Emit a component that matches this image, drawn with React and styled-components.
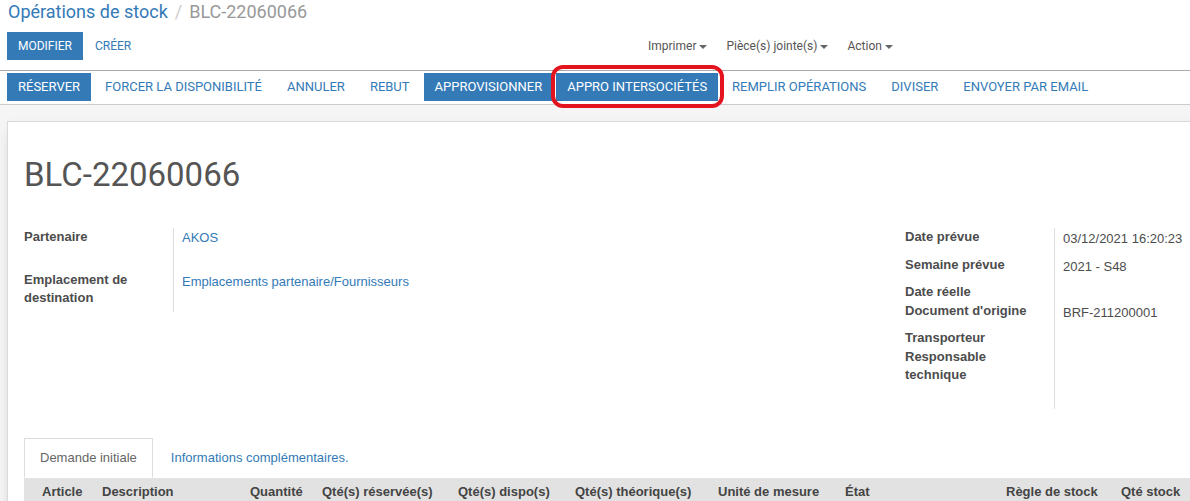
import React from "react";
import styled, { createGlobalStyle } from "styled-components";

const Global = createGlobalStyle`
  html, body { margin: 0; padding: 0; background: #fff; }
  body {
    font-family: "Liberation Sans", Arial, sans-serif;
    font-size: 13px;
    color: #4c4c4c;
    overflow: hidden;
  }
  * { box-sizing: border-box; }
`;

const BLUE = "#337ab7";

const Page = styled.div`
  width: 1190px;
  height: 501px;
  overflow: hidden;
  display: flex;
  flex-direction: column;
`;

const ControlPanel = styled.div`
  padding: 0 7px 10px 7px;
  background: #fff;
`;

const Breadcrumb = styled.div`
  font-family: Roboto, sans-serif;
  font-size: 18px;
  line-height: 24px;
  display: flex;
  gap: 7px;
  padding-left: 1px;
`;

const Crumb = styled.span`
  color: ${BLUE};
`;

const CrumbSep = styled.span`
  color: #ccc;
`;

const CrumbCurrent = styled.span`
  color: #999;
`;

const CpRow = styled.div`
  display: flex;
  align-items: center;
  margin-top: 8px;
`;

const CpButtons = styled.div`
  width: 641px;
  display: flex;
  gap: 1px;
`;

const Button = styled.button`
  font-family: Roboto, sans-serif;
  font-size: ${(p) => (p.$size === "sm" ? "12px" : "13px")};
  line-height: 18px;
  padding: 4px 10px;
  border: 1px solid ${(p) => (p.$primary ? BLUE : "transparent")};
  background: ${(p) => (p.$primary ? BLUE : "transparent")};
  color: ${(p) => (p.$primary ? "#fff" : BLUE)};
  text-transform: uppercase;
  border-radius: 0;
  white-space: nowrap;
  cursor: pointer;
  position: relative;
  ${(p) =>
    p.$flagged &&
    `
    &::after {
      content: "";
      position: absolute;
      inset: -9px -7px -8px -6px;
      border: 4px solid #e3141e;
      border-radius: 12px;
      pointer-events: none;
    }
  `}
`;

const Sidebar = styled.div`
  display: flex;
  gap: 19px;
  font-family: Roboto, sans-serif;
  font-size: 12px;
  line-height: 18px;
  color: #555;
`;

const Dropdown = styled.span`
  display: inline-flex;
  align-items: center;
`;

const Caret = styled.span`
  display: inline-block;
  width: 0;
  height: 0;
  margin-left: 3px;
  margin-top: 1px;
  border-top: 4px solid #666;
  border-left: 4px solid transparent;
  border-right: 4px solid transparent;
`;

const StatusBar = styled.div`
  border-top: 1px solid #aaa;
  border-bottom: 1px solid #ccc;
  padding: 2px 7px 3px;
  display: flex;
  gap: 3px;
  background: #fff;
`;

const FormBg = styled.div`
  flex: 1;
  background: #f5f5f5;
  padding: 16px 0 0 7px;
`;

const Sheet = styled.div`
  width: 1260px;
  height: 420px;
  background: #fff;
  border: 1px solid #dadada;
  box-shadow: 0 4px 14px -6px rgba(0, 0, 0, 0.25);
  padding: 34px 16px 0;
`;

const Title = styled.h1`
  margin: 0;
  font-family: Roboto, sans-serif;
  font-weight: 400;
  font-size: 33px;
  line-height: 38px;
  color: #555;
`;

const Groups = styled.div`
  display: flex;
  margin-top: 34px;
`;

const Group = styled.div`
  display: flex;
  flex-direction: column;
  width: ${(p) => p.$width || "auto"};
`;

const FieldRow = styled.div`
  display: grid;
  grid-template-columns: 150px 1fr;
  min-height: ${(p) => p.$h}px;
`;

const Label = styled.div`
  font-weight: bold;
  line-height: 18px;
  padding-right: 8px;
  border-right: 1px solid #ddd;
  color: #4c4c4c;
`;

const Value = styled.div`
  line-height: 18px;
  padding: ${(p) => p.$top || 0}px 0 0 8px;
  color: ${(p) => (p.$link ? BLUE : "#4c4c4c")};
  white-space: nowrap;
`;

const Tabs = styled.div`
  display: flex;
  gap: 2px;
  margin-top: 29px;
`;

const Tab = styled.div`
  padding: 10px 15px;
  line-height: 18px;
  border: 1px solid ${(p) => (p.$active ? "#ddd" : "transparent")};
  border-bottom-color: ${(p) => (p.$active ? "#fff" : "transparent")};
  background: ${(p) => (p.$active ? "#fff" : "transparent")};
  color: ${(p) => (p.$active ? "#666" : BLUE)};
`;

const TableHead = styled.div`
  display: grid;
  grid-template-columns: 60px 148px 72px 136px 117px 143px 127px 161px 115px 1fr;
  background: #e2e2e2;
  padding: 5px 0 6px 18px;
  font-weight: bold;
  line-height: 18px;
  color: #444;
`;

const HeadCell = styled.div`
  white-space: nowrap;
`;

const leftFields = [
  { label: "Partenaire", value: "AKOS", link: true, h: 43, top: 1 },
  {
    label: "Emplacement de destination",
    value: "Emplacements partenaire/Fournisseurs",
    link: true,
    h: 41,
    top: 2,
  },
];

const rightFields = [
  { label: "Date prévue", value: "03/12/2021 16:20:23", h: 28, top: 2 },
  { label: "Semaine prévue", value: "2021 - S48", h: 27, top: 2 },
  { label: "Date réelle", value: "", h: 19 },
  { label: "Document d'origine", value: "BRF-211200001", h: 27, top: 2 },
  { label: "Transporteur", value: "", h: 19 },
  { label: "Responsable technique", value: "", h: 61 },
];

const statusButtons = [
  { text: "Réserver", primary: true },
  { text: "Forcer la disponibilité" },
  { text: "Annuler" },
  { text: "Rebut" },
  { text: "Approvisionner", primary: true },
  { text: "Appro intersociétés", primary: true, flagged: true },
  { text: "Remplir opérations" },
  { text: "Diviser" },
  { text: "Envoyer par email" },
];

const columns = [
  "Article",
  "Description",
  "Quantité",
  "Qté(s) réservée(s)",
  "Qté(s) dispo(s)",
  "Qté(s) théorique(s)",
  "Unité de mesure",
  "État",
  "Règle de stock",
  "Qté stock",
];

function Fields({ items }) {
  return items.map((f) => (
    <FieldRow key={f.label} $h={f.h}>
      <Label>{f.label}</Label>
      <Value $link={f.link} $top={f.top}>
        {f.value}
      </Value>
    </FieldRow>
  ));
}

export default function App() {
  return (
    <Page>
      <Global />
      <ControlPanel>
        <Breadcrumb>
          <Crumb>Opérations de stock</Crumb>
          <CrumbSep>/</CrumbSep>
          <CrumbCurrent>BLC-22060066</CrumbCurrent>
        </Breadcrumb>
        <CpRow>
          <CpButtons>
            <Button $primary $size="sm">Modifier</Button>
            <Button $size="sm">Créer</Button>
          </CpButtons>
          <Sidebar>
            <Dropdown>
              Imprimer <Caret />
            </Dropdown>
            <Dropdown>
              Pièce(s) jointe(s) <Caret />
            </Dropdown>
            <Dropdown>
              Action <Caret />
            </Dropdown>
          </Sidebar>
        </CpRow>
      </ControlPanel>

      <StatusBar>
        {statusButtons.map((b) => (
          <Button key={b.text} $primary={b.primary} $flagged={b.flagged}>
            {b.text}
          </Button>
        ))}
      </StatusBar>

      <FormBg>
        <Sheet>
          <Title>BLC-22060066</Title>
          <Groups>
            <Group $width="881px">
              <Fields items={leftFields} />
            </Group>
            <Group>
              <Fields items={rightFields} />
            </Group>
          </Groups>
          <Tabs>
            <Tab $active>Demande initiale</Tab>
            <Tab>Informations complémentaires.</Tab>
          </Tabs>
          <TableHead>
            {columns.map((c) => (
              <HeadCell key={c}>{c}</HeadCell>
            ))}
          </TableHead>
        </Sheet>
      </FormBg>
    </Page>
  );
}
